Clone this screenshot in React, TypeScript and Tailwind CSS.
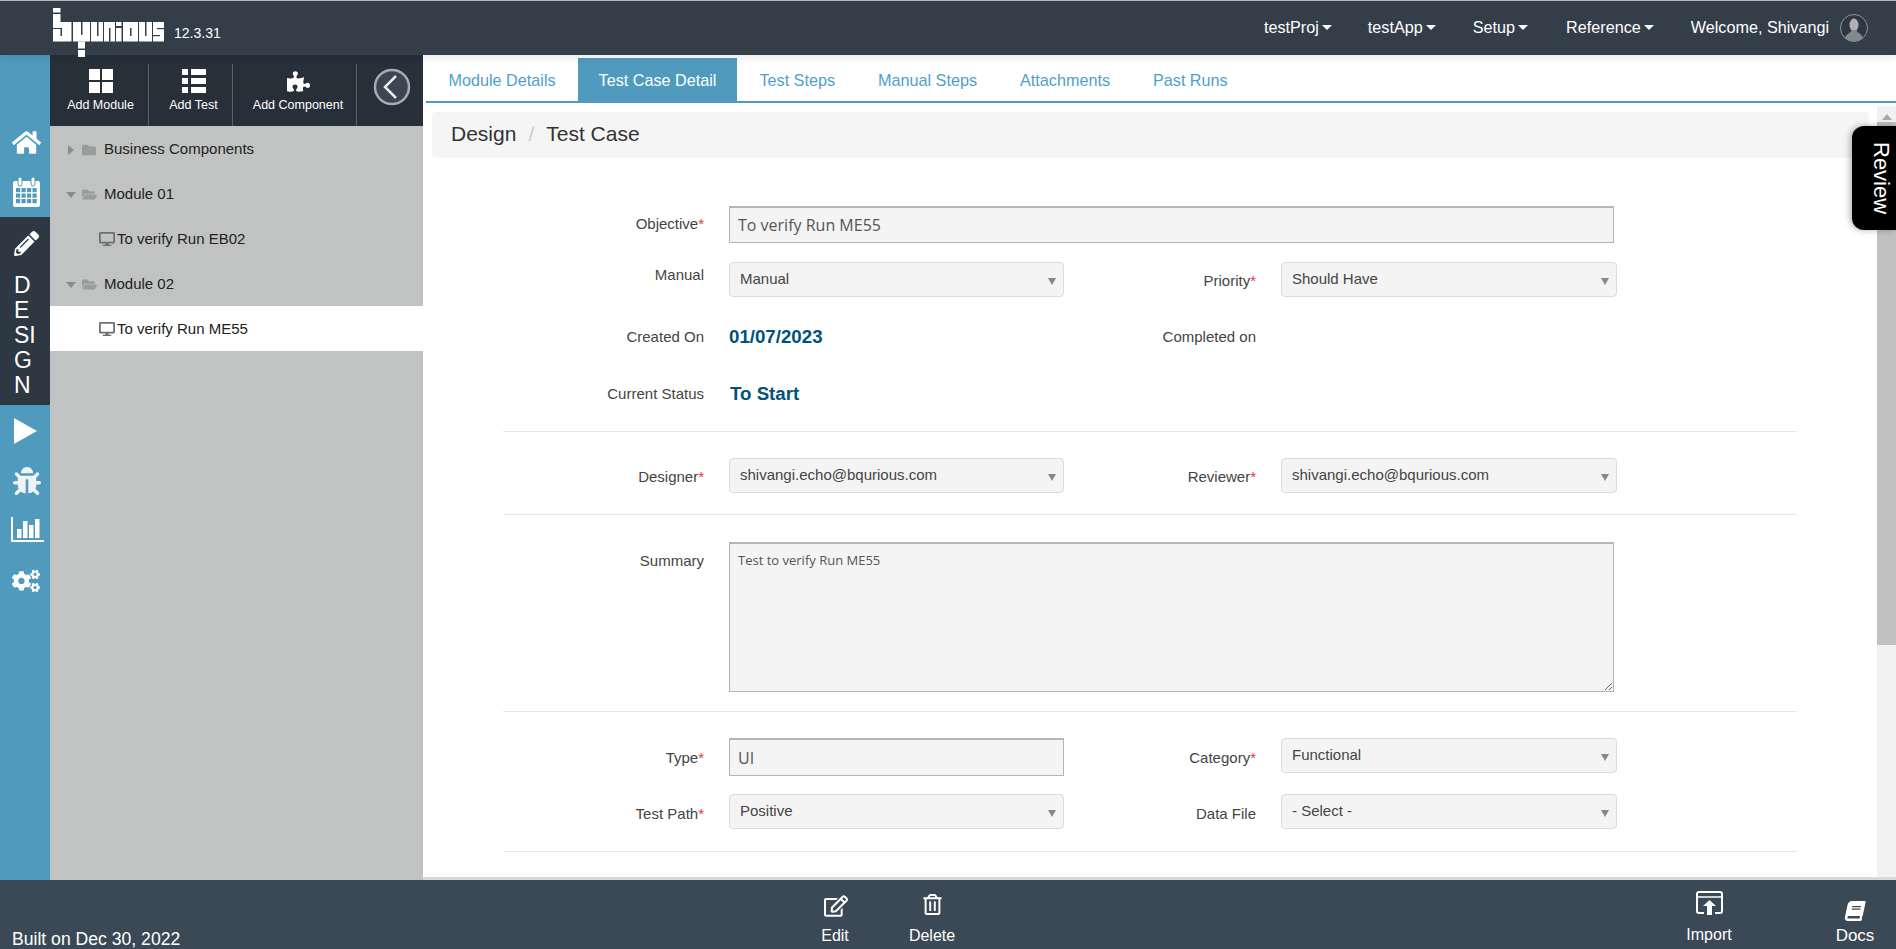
import React from 'react';
import { FaHome, FaPencilAlt, FaBug, FaCogs, FaPuzzlePiece, FaFolder, FaFolderOpen, FaDesktop, FaRegEdit, FaRegTrashAlt, FaBook } from 'react-icons/fa';

const Logo = () => {
    // blocky wordmark, page px offset from (53, 8)
    const blocks = [
        [0, 0, 7.5, 4.5], [0, 6, 7.5, 8], [0, 14, 18.5, 19.5],
        [20, 14, 17, 19.5], [25, 33.5, 7, 7], [25, 42, 7, 7],
        [38, 14, 12, 19.5], [51, 14, 11, 19.5], [63, 14, 5.5, 4], [63, 20, 5.5, 13.5],
        [70, 14, 15, 19.5], [86, 14, 13, 19.5], [100, 14, 11, 19.5],
    ];
    const slits = [
        [0, 20, 8, 1], [7.5, 20, 1.5, 8], [28, 14, 1.5, 13], [44, 14, 1.5, 14], [56, 20, 1.5, 13.5],
        [77, 20, 1.5, 8], [92, 14, 1.5, 14], [104, 20, 7, 1.2], [100, 27, 7, 1.2],
    ];
    return (
        <svg viewBox="0 0 111 50" className="w-[111px] h-[50px]">
            {blocks.map(([x, y, w, h], i) => (
                <rect key={i} x={x} y={y} width={w} height={h} fill="#fff" />
            ))}
            {slits.map(([x, y, w, h], i) => (
                <rect key={i} x={x} y={y} width={w} height={h} fill="#343e49" />
            ))}
        </svg>
    );
};

const CalendarIcon = () => (
    <svg viewBox="0 0 27 30" className="w-[27px] h-[30px]">
        <rect x="0" y="4" width="27" height="26" rx="2" fill="#fff" />
        <rect x="5" y="0" width="4" height="9" rx="2" fill="#fff" stroke="#4f9abd" strokeWidth="1" />
        <rect x="18" y="0" width="4" height="9" rx="2" fill="#fff" stroke="#4f9abd" strokeWidth="1" />
        {[11, 16.5, 22].map((y) =>
            [3, 8.5, 14, 19.5].map((x) => <rect key={`${x}-${y}`} x={x} y={y} width="4.2" height="4.2" fill="#4f9abd" />)
        )}
    </svg>
);

const ChartIcon = () => (
    <svg viewBox="0 0 33 25" className="w-[33px] h-[25px]" fill="#fff">
        <rect x="0" y="0" width="2" height="25" />
        <rect x="0" y="23" width="33" height="2" />
        <rect x="6" y="12" width="4.5" height="9" />
        <rect x="12" y="4" width="4.5" height="17" />
        <rect x="18" y="8" width="4.5" height="13" />
        <rect x="24" y="2" width="4.5" height="19" />
    </svg>
);

const GridIcon = () => (
    <svg viewBox="0 0 24 24" className="w-[24px] h-[24px]" fill="#fff">
        <rect x="0" y="0" width="11" height="11" />
        <rect x="13" y="0" width="11" height="11" />
        <rect x="0" y="13" width="11" height="11" />
        <rect x="13" y="13" width="11" height="11" />
    </svg>
);

const ListIcon = () => (
    <svg viewBox="0 0 24 24" className="w-[24px] h-[24px]" fill="#fff">
        {[0, 9, 18].map((y) => (
            <g key={y}>
                <rect x="0" y={y} width="6" height="6" />
                <rect x="9" y={y} width="15" height="6" />
            </g>
        ))}
    </svg>
);

const BackIcon = () => (
    <svg viewBox="0 0 38 38" className="w-[38px] h-[38px]" fill="none">
        <circle cx="19" cy="19" r="17" fill="#3a4651" stroke="#a5acb1" strokeWidth="2.5" />
        <path d="M23 8 L12 19 L23 30" stroke="#e8eaeb" strokeWidth="2.5" />
    </svg>
);

const ImportIcon = () => (
    <svg viewBox="0 0 27 24" className="w-[27px] h-[24px]" fill="none" stroke="#fff" strokeWidth="2">
        <path d="M8 22 H3 a2 2 0 0 1 -2 -2 V3 a2 2 0 0 1 2 -2 H24 a2 2 0 0 1 2 2 V20 a2 2 0 0 1 -2 2 H19" />
        <path d="M1 6 H26" strokeWidth="1.5" />
        <path d="M13.5 9 L20 15 H16 V24 H11 V15 H7 Z" fill="#fff" stroke="none" />
    </svg>
);

const Avatar = () => (
    <svg viewBox="0 0 28 28" className="w-[28px] h-[28px]">
        <circle cx="14" cy="14" r="13.5" fill="#2f3842" stroke="#8f9499" />
        <ellipse cx="14" cy="11" rx="4.5" ry="6.5" fill="#aeb1b4" />
        <path d="M5 24 C7 19 11 19 12 16 H16 C17 19 21 19 23 24 C20 28 8 28 5 24 Z" fill="#85898d" />
    </svg>
);

const Caret = () => <span className="inline-block w-0 h-0 ml-[3px] border-t-[5px] border-x-[5px] border-x-transparent border-t-white" />;

const NavItem = ({ label, className }: { label: string; className?: string }) => (
    <div className={`flex items-center ${className ?? ''}`}>
        {label}
        <Caret />
    </div>
);

const ToolbarItem = ({ label, icon, className }: { label: string; icon: React.ReactNode; className: string }) => (
    <div className={`h-[62px] mt-[9px] flex flex-col items-center border-r border-[#5a626b] ${className}`}>
        <div className="h-[24px] mt-[5px] flex items-center">{icon}</div>
        <div className="mt-[4px] text-[12.5px] leading-[16px] text-white whitespace-nowrap">{label}</div>
    </div>
);

const FolderRow = ({ label, open }: { label: string; open?: boolean }) => (
    <div className="h-[45px] pt-[2px] flex items-center text-[15px] text-[#222]">
        {open ? (
            <span className="ml-[16px] w-0 h-0 border-t-[6px] border-x-[5px] border-x-transparent border-t-[#8b8d8d]" />
        ) : (
            <span className="ml-[18px] w-0 h-0 border-l-[6px] border-y-[5px] border-y-transparent border-l-[#8b8d8d]" />
        )}
        {open ? <FaFolderOpen className={`ml-[6px] text-[15px] text-[#9a9c9c]`} /> : <FaFolder className="ml-[8px] text-[14px] text-[#9a9c9c]" />}
        <span className={open ? 'ml-[7px]' : 'ml-[8px]'}>{label}</span>
    </div>
);

const TestRow = ({ label, active }: { label: string; active?: boolean }) => (
    <div className={`h-[45px] pt-[1px] flex items-center text-[15px] text-[#222] pl-[49px] ${active ? 'bg-white' : ''}`}>
        <FaDesktop className="text-[16px] text-[#6f7071]" />
        <span className="ml-[2px]">{label}</span>
    </div>
);

const Tab = ({ label, active }: { label: string; active?: boolean }) => (
    <div className={`h-[44px] mr-[2px] px-[20.5px] flex items-center text-[16.2px] ${active ? 'bg-[#4f9abd] text-white' : 'text-[#4f9fcd]'}`}>
        {label}
    </div>
);

const Required = () => <span className="text-[#e33]">*</span>;

const Label = ({ text, required, width, className }: { text: string; required?: boolean; width: string; className?: string }) => (
    <div className={`${width} text-right text-[15px] text-[#444] shrink-0 ${className ?? ''}`}>
        {text}
        {required && <Required />}
    </div>
);

const SelectBox = ({ value, className }: { value: string; className: string }) => (
    <div className={`relative h-[35px] flex items-center pl-[10px] bg-[#f4f4f4] border border-[#dcdcdc] rounded-[4px] text-[15px] text-[#444] shrink-0 ${className}`}>
        {value}
        <span className="absolute right-[7px] top-[15px] w-0 h-0 border-t-[7px] border-x-[4px] border-x-transparent border-t-[#888]" />
    </div>
);

const Divider = () => <div className="h-px bg-[#e8e8e8]" />;

const FooterAction = ({ label, icon, className }: { label: string; icon: React.ReactNode; className: string }) => (
    <div className={`flex flex-col items-center text-white ${className}`}>
        {icon}
        <span className="mt-auto">{label}</span>
    </div>
);

const App = () => {
    return (
        <div className="h-[949px] w-[1896px] flex flex-col overflow-hidden relative bg-white font-['Liberation_Sans',Arial,sans-serif]">
            {/* top bar */}
            <header className="h-[55px] shrink-0 flex items-start bg-[#343e49] border-t border-[#b8b8b8] relative z-10 shadow-[0_2px_8px_rgba(0,0,0,0.1)]">
                <div className="ml-[53px] mt-[7px]">
                    <Logo />
                </div>
                <div className="ml-[10px] mt-[24px] text-[14px] leading-[16px] text-white">12.3.31</div>
                <nav className="ml-auto mr-[28px] h-full pb-[1px] flex items-center text-[16.2px] text-white">
                    <NavItem label="testProj" className="mr-[36px]" />
                    <NavItem label="testApp" className="mr-[37px]" />
                    <NavItem label="Setup" className="mr-[38px]" />
                    <NavItem label="Reference" className="mr-[37px]" />
                    <span className="mr-[11px]">Welcome, Shivangi</span>
                    <Avatar />
                </nav>
            </header>

            <div className="flex-1 flex min-h-0">
                {/* icon rail */}
                <aside className="w-[50px] shrink-0 bg-[#4f9abd] flex flex-col text-white">
                    <div className="h-[162px] flex flex-col items-center pl-[2px]">
                        <FaHome className="mt-[73px] text-[29px]" />
                        <div className="mt-[20px]">
                            <CalendarIcon />
                        </div>
                    </div>
                    <div className="h-[188px] bg-[#2e3842] pl-[14px]">
                        <FaPencilAlt className="mt-[14px] text-[25px]" />
                        <div className="mt-[17px] text-[23px] leading-[25px]">
                            <div>D</div>
                            <div>E</div>
                            <div>SI</div>
                            <div>G</div>
                            <div>N</div>
                        </div>
                    </div>
                    <div className="flex-1 flex flex-col items-center">
                        <svg viewBox="0 0 23 26" className="w-[23px] h-[26px] mt-[13px] ml-[1px]" fill="#fff">
                            <polygon points="0,0 23,13 0,26" />
                        </svg>
                        <FaBug className="mt-[23px] text-[28px] text-[#f0f3f4] ml-[4px]" />
                        <div className="mt-[22px] ml-[4px]">
                            <ChartIcon />
                        </div>
                        <FaCogs className="mt-[25px] text-[28px] ml-[2px]" />
                    </div>
                </aside>

                {/* module tree */}
                <section className="w-[373px] shrink-0 flex flex-col bg-[#c1c3c2]">
                    <div className="h-[71px] shrink-0 flex bg-[#272f39]">
                        <ToolbarItem label="Add Module" icon={<GridIcon />} className="w-[99px] pl-[3px]" />
                        <ToolbarItem label="Add Test" icon={<ListIcon />} className="w-[84px] pl-[6px]" />
                        <ToolbarItem label="Add Component" icon={<FaPuzzlePiece className="text-[23px] text-white" />} className="w-[124px] pl-[7px]" />
                        <div className="ml-[16px] mt-[13px]">
                            <BackIcon />
                        </div>
                    </div>
                    <FolderRow label="Business Components" />
                    <FolderRow label="Module 01" open />
                    <TestRow label="To verify Run EB02" />
                    <FolderRow label="Module 02" open />
                    <TestRow label="To verify Run ME55" active />
                </section>

                {/* main panel */}
                <main className="flex-1 min-w-0 flex flex-col">
                    <div className="flex-1 min-h-0 flex flex-col pl-[3px]">
                        <div className="h-[48px] shrink-0 pt-[3px] flex border-b-2 border-[#4f9abd]">
                            <div className="pl-[2px] flex">
                                <Tab label="Module Details" />
                                <Tab label="Test Case Detail" active />
                                <Tab label="Test Steps" />
                                <Tab label="Manual Steps" />
                                <Tab label="Attachments" />
                                <Tab label="Past Runs" />
                            </div>
                        </div>
                        <div className="flex-1 min-h-0 flex">
                            <div className="flex-1 min-w-0 overflow-hidden">
                                <div className="ml-[6px] mr-[8px] mt-[9px] h-[46px] pb-[2px] flex items-center pl-[19px] bg-[#f5f5f5] rounded-[4px] text-[21px] text-[#333]">
                                    Design
                                    <span className="mx-[12px] text-[#ccc]">/</span>
                                    Test Case
                                </div>

                                {/* form */}
                                <div className="ml-[77px] mr-[80px]">
                                    <div className="mt-[48px] flex items-center">
                                        <Label text="Objective" required width="w-[201px]" className="mr-[25px]" />
                                        <input
                                            readOnly
                                            value="To verify Run ME55"
                                            className="w-[885px] h-[37px] pl-[8px] bg-[#f4f4f4] border border-t-2 border-[#b5b5b5] text-[16px] text-[#555] font-['Open_Sans',sans-serif] outline-none"
                                        />
                                    </div>
                                    <div className="mt-[19px] flex items-center">
                                        <Label text="Manual" width="w-[201px]" className="mr-[25px] mb-[9px]" />
                                        <SelectBox value="Manual" className="w-[335px]" />
                                        <Label text="Priority" required width="w-[192px]" className="mr-[25px] pt-[4px]" />
                                        <SelectBox value="Should Have" className="w-[336px]" />
                                    </div>
                                    <div className="mt-[30px] h-[20px] flex items-center">
                                        <Label text="Created On" width="w-[201px]" className="mr-[25px]" />
                                        <div className="w-[335px] text-[18.7px] font-bold text-[#00527a]">01/07/2023</div>
                                        <Label text="Completed on" width="w-[192px]" />
                                    </div>
                                    <div className="mt-[37px] h-[20px] flex items-center">
                                        <Label text="Current Status" width="w-[201px]" className="mr-[26px]" />
                                        <div className="text-[18.7px] font-bold text-[#00527a]">To Start</div>
                                    </div>
                                    <div className="mt-[27px]">
                                        <Divider />
                                    </div>
                                    <div className="mt-[26px] flex items-center">
                                        <Label text="Designer" required width="w-[201px]" className="mr-[25px] pt-[3px]" />
                                        <SelectBox value="shivangi.echo@bqurious.com" className="w-[335px]" />
                                        <Label text="Reviewer" required width="w-[192px]" className="mr-[25px] pt-[3px]" />
                                        <SelectBox value="shivangi.echo@bqurious.com" className="w-[336px]" />
                                    </div>
                                    <div className="mt-[21px]">
                                        <Divider />
                                    </div>
                                    <div className="mt-[27px] flex items-start">
                                        <Label text="Summary" width="w-[201px]" className="mr-[25px] pt-[8px]" />
                                        <textarea
                                            readOnly
                                            value="Test to verify Run ME55"
                                            className="block w-[885px] h-[150px] pl-[8px] pt-[7px] bg-[#f4f4f4] border border-t-2 border-[#b5b5b5] text-[13px] text-[#555] font-['Open_Sans',sans-serif] outline-none resize"
                                        />
                                    </div>
                                    <div className="mt-[19px]">
                                        <Divider />
                                    </div>
                                    <div className="mt-[26px] flex items-start">
                                        <Label text="Type" required width="w-[201px]" className="mr-[25px] pt-[9px]" />
                                        <input
                                            readOnly
                                            value="UI"
                                            className="w-[335px] h-[38px] pl-[8px] bg-[#f4f4f4] border border-t-2 border-[#b5b5b5] text-[16px] text-[#555] font-['Open_Sans',sans-serif] outline-none"
                                        />
                                        <Label text="Category" required width="w-[192px]" className="mr-[25px] pt-[9px]" />
                                        <SelectBox value="Functional" className="w-[336px]" />
                                    </div>
                                    <div className="mt-[18px] flex items-center">
                                        <Label text="Test Path" required width="w-[201px]" className="mr-[25px] pt-[5px]" />
                                        <SelectBox value="Positive" className="w-[335px]" />
                                        <Label text="Data File" width="w-[192px]" className="mr-[25px] pt-[5px]" />
                                        <SelectBox value="- Select -" className="w-[336px]" />
                                    </div>
                                    <div className="mt-[22px]">
                                        <Divider />
                                    </div>
                                </div>
                            </div>

                            {/* scrollbar */}
                            <div className="w-[19px] shrink-0 mt-[3px] bg-[#f1f1f1] flex flex-col items-center">
                                <span className="mt-[8px] w-0 h-0 border-b-[6px] border-x-[5px] border-x-transparent border-b-[#a8a8a8]" />
                                <div className="mt-[2px] w-full h-[523px] bg-[#c1c1c1]" />
                            </div>
                        </div>
                    </div>
                    <div className="h-[3px] shrink-0 bg-[#d8d8d8]" />
                </main>
            </div>

            {/* review tab floats over the scrollbar */}
            <div className="absolute right-0 top-[126px] w-[44px] h-[104px] pl-[14px] flex items-center justify-center bg-black rounded-l-xl text-white text-[22px] [writing-mode:vertical-rl] shadow-[-2px_0_6px_rgba(0,0,0,0.3)]">
                Review
            </div>

            {/* footer */}
            <footer className="h-[69px] shrink-0 flex bg-[#3b4855] text-[16px]">
                <div className="w-[790px] pl-[12px] flex items-end text-[17.6px] leading-[20px] text-white">Built on Dec 30, 2022</div>
                <FooterAction label="Edit" icon={<FaRegEdit className="mt-[14px] text-[24px] ml-[2px]" />} className="w-[90px] pb-[1px]" />
                <FooterAction label="Delete" icon={<FaRegTrashAlt className="mt-[14px] text-[21px]" />} className="w-[104px] pb-[1px]" />
                <FooterAction label="Import" icon={<div className="mt-[11px]"><ImportIcon /></div>} className="w-[80px] ml-[685px] pb-[2px]" />
                <FooterAction label="Docs" icon={<FaBook className="mt-[21px] text-[20px] -skew-x-12" />} className="w-[82px] ml-[65px] pb-[1px] text-[17px]" />
            </footer>
        </div>
    );
};

export default App;
